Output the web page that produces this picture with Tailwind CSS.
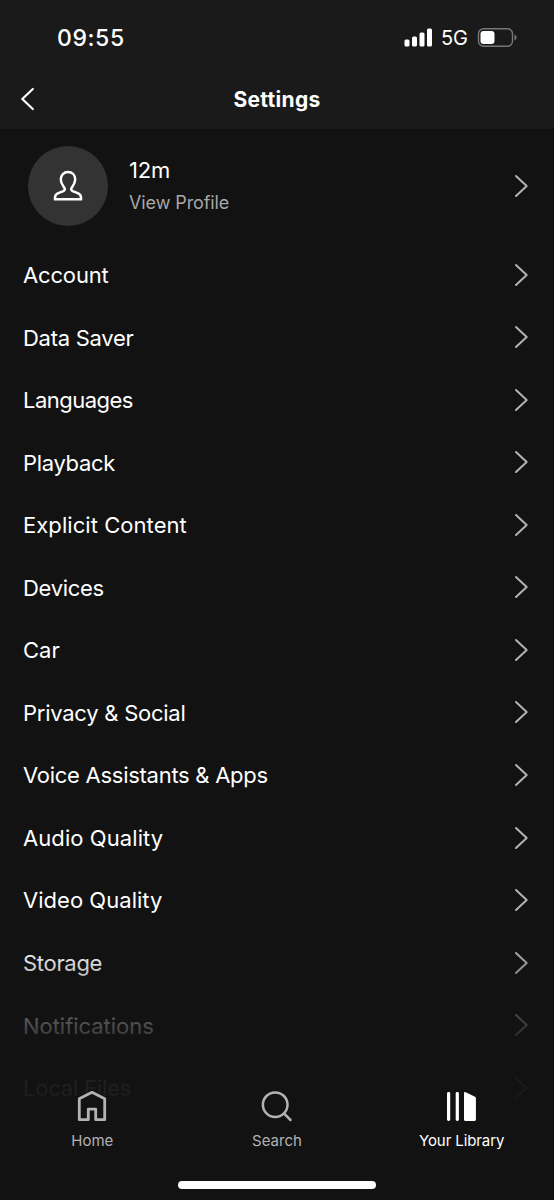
<!DOCTYPE html>
<html lang="en">
<head>
<meta charset="utf-8">
<title>Settings</title>
<script src="https://cdn.jsdelivr.net/npm/@tailwindcss/browser@4"></script>
</head>
<body class="bg-[#121212]">
<div class="relative flex h-[1200px] w-[554px] flex-col overflow-hidden bg-[#121212] font-['Inter',sans-serif] text-white">
  <header class="h-[129px] shrink-0 bg-[#1a1a1a]">
    <div class="flex h-[70px] items-center justify-between pt-[5px] pr-[37px] pl-[57px]">
      <span class="text-[23px] leading-[30px] font-medium tracking-[0.6px]">09:55</span>
      <div class="flex items-center">
        <svg class="h-[20px] w-[30px]" viewBox="0 0 30 20" fill="#fff"><rect x="1.500" y="11.500" width="5" height="7" rx="1.500"/><rect x="9" y="8.500" width="5" height="10" rx="1.500"/><rect x="16.500" y="4.500" width="5" height="14" rx="1.500"/><rect x="24" y=".5" width="5" height="18" rx="1.500"/></svg>
        <span class="ml-[8px] text-[20px] leading-[30px]">5G</span>
        <svg class="ml-[9px] h-[20px] w-[40px]" viewBox="0 0 40 20"><rect x="1.500" y=".8" width="34" height="17.400" rx="5" fill="none" stroke="#777" stroke-width="1.400"/><rect x="3.500" y="3" width="14" height="13" rx="3" fill="#fff"/><path d="M37.500 6.500v6c1.500-.6 2-1.800 2-3s-.5-2.400-2-3z" fill="#777"/></svg>
      </div>
    </div>
    <div class="grid h-[58px] grid-cols-3 items-center px-[20px]">
      <svg class="h-[24px] w-[16px]" viewBox="0 0 16 24" fill="none" stroke="#fff" stroke-width="2.200" stroke-linecap="round" stroke-linejoin="round"><path d="M12.800 2 2.300 12l10.500 10"/></svg>
      <h1 class="pt-[2px] text-center text-[21px] leading-[28px] font-bold tracking-[0.300px]">Settings</h1>
    </div>
  </header>
  <main class="flex flex-col pt-[0.400px]">
    <div class="flex h-[114px] shrink-0 items-center pr-[25px] pl-[28px]">
      <div class="flex h-[80px] w-[80px] items-center justify-center rounded-full bg-[#333]">
        <svg class="h-[32px] w-[32px]" viewBox="0 0 32 32" fill="none" stroke="#fff" stroke-width="2.500" stroke-linejoin="miter"><path d="M3 29.200v-1.700c0-2.100 1.200-3.600 3.300-4.400l5-2c1.600-.7 1.900-2 1-3.500-1.600-2.200-3.500-4.300-3.500-8 0-4.600 3-7.500 7.200-7.500s7.200 2.900 7.200 7.500c0 3.700-1.900 5.800-3.500 8-.9 1.500-.6 2.800 1 3.500l5 2c2.100.8 3.300 2.300 3.300 4.400v1.700z"/></svg>
      </div>
      <div class="ml-[21px] flex flex-1 flex-col gap-[5px]">
        <span class="text-[22px] leading-[28px] tracking-[-0.200px]">12m</span>
        <span class="text-[18px] leading-[28px] tracking-[-0.100px] text-[#a7a7a7]">View Profile</span>
      </div>
      <svg class="h-[24px] w-[16px]" viewBox="0 0 16 24" fill="none" stroke="#b3b3b3" stroke-width="2" stroke-linecap="round" stroke-linejoin="round"><path d="M3 2l10.700 10L3 22"/></svg>
    </div>
    <ul id="list" class="flex flex-col"></ul>
  </main>
  <template id="row">
    <li class="flex h-[62.550px] shrink-0 items-center justify-between pr-[25px] pl-[23px]">
      <span class="pt-[0.600px] text-[22px] leading-[28px]"></span>
      <svg class="h-[24px] w-[16px]" viewBox="0 0 16 24" fill="none" stroke="#b3b3b3" stroke-width="2" stroke-linecap="round" stroke-linejoin="round"><path d="M3 2l10.700 10L3 22"/></svg>
    </li>
  </template>
  <nav class="absolute inset-x-0 bottom-0 flex h-[270px] flex-col justify-end bg-[linear-gradient(to_bottom,rgba(18,18,18,0)_0px,rgba(18,18,18,0.07)_22px,rgba(18,18,18,0.28)_46px,rgba(18,18,18,0.7)_88px,rgba(18,18,18,0.82)_105px,rgba(18,18,18,0.94)_150px,rgba(18,18,18,1)_215px)]">
    <div class="grid h-[70px] grid-cols-3 text-[15px] leading-[20px] text-[#b3b3b3]">
      <a class="flex flex-col items-center gap-[8px]">
        <svg class="h-[34px] w-[34px]" viewBox="0 0 34 34" fill="none" stroke="#b3b3b3" stroke-width="2.800" stroke-linejoin="round"><path d="M4.300 9.700 17 3.300l12.700 6.400v21h-9V20.200h-7.400v10.500h-9z"/></svg>
        Home</a>
      <a class="flex flex-col items-center gap-[8px]">
        <svg class="h-[34px] w-[34px]" viewBox="0 0 34 34" fill="none" stroke="#b3b3b3" stroke-width="2.500" stroke-linecap="round"><circle cx="15.200" cy="15.700" r="12.300"/><path d="m24.200 24.700 6.300 6.300"/></svg>
        Search</a>
      <a class="flex flex-col items-center gap-[8px] tracking-[-0.100px] text-white">
        <svg class="h-[34px] w-[34px]" viewBox="0 0 34 34" fill="#fff"><rect x="2" y="3" width="3.200" height="29" rx="1.400"/><rect x="10.700" y="3" width="3.200" height="29" rx="1.400"/><path d="M19 4.200c0-1 .9-1.500 1.800-1L30 7.800c.6.300.9.800.9 1.400v21.300c0 .9-.6 1.500-1.500 1.500h-8.900c-.9 0-1.500-.6-1.500-1.500z"/></svg>
        Your Library</a>
    </div>
    <div class="flex h-[41px] justify-center pt-[22px]"><div class="h-[8px] w-[198px] rounded-full bg-white"></div></div>
  </nav>
</div>
<script>
// Label and letter spacing in pixels
const items = [["Account",-.15],["Data Saver",-.27],["Languages",-.52],["Playback",-.32],["Explicit Content",.06],["Devices",-.3],["Car",0],["Privacy & Social",-.25],["Voice Assistants & Apps",-.27],["Audio Quality",.08],["Video Quality",.03],["Storage",-.3],["Notifications",-.04],["Local Files",-.2]];
const list = document.getElementById("list"), row = document.getElementById("row");
for (const [text, spacing] of items) {
  const node = row.content.cloneNode(true);
  const label = node.querySelector("span");
  label.textContent = text;
  label.style.letterSpacing = spacing + "px";
  list.append(node);
}
</script>
</body>
</html>
